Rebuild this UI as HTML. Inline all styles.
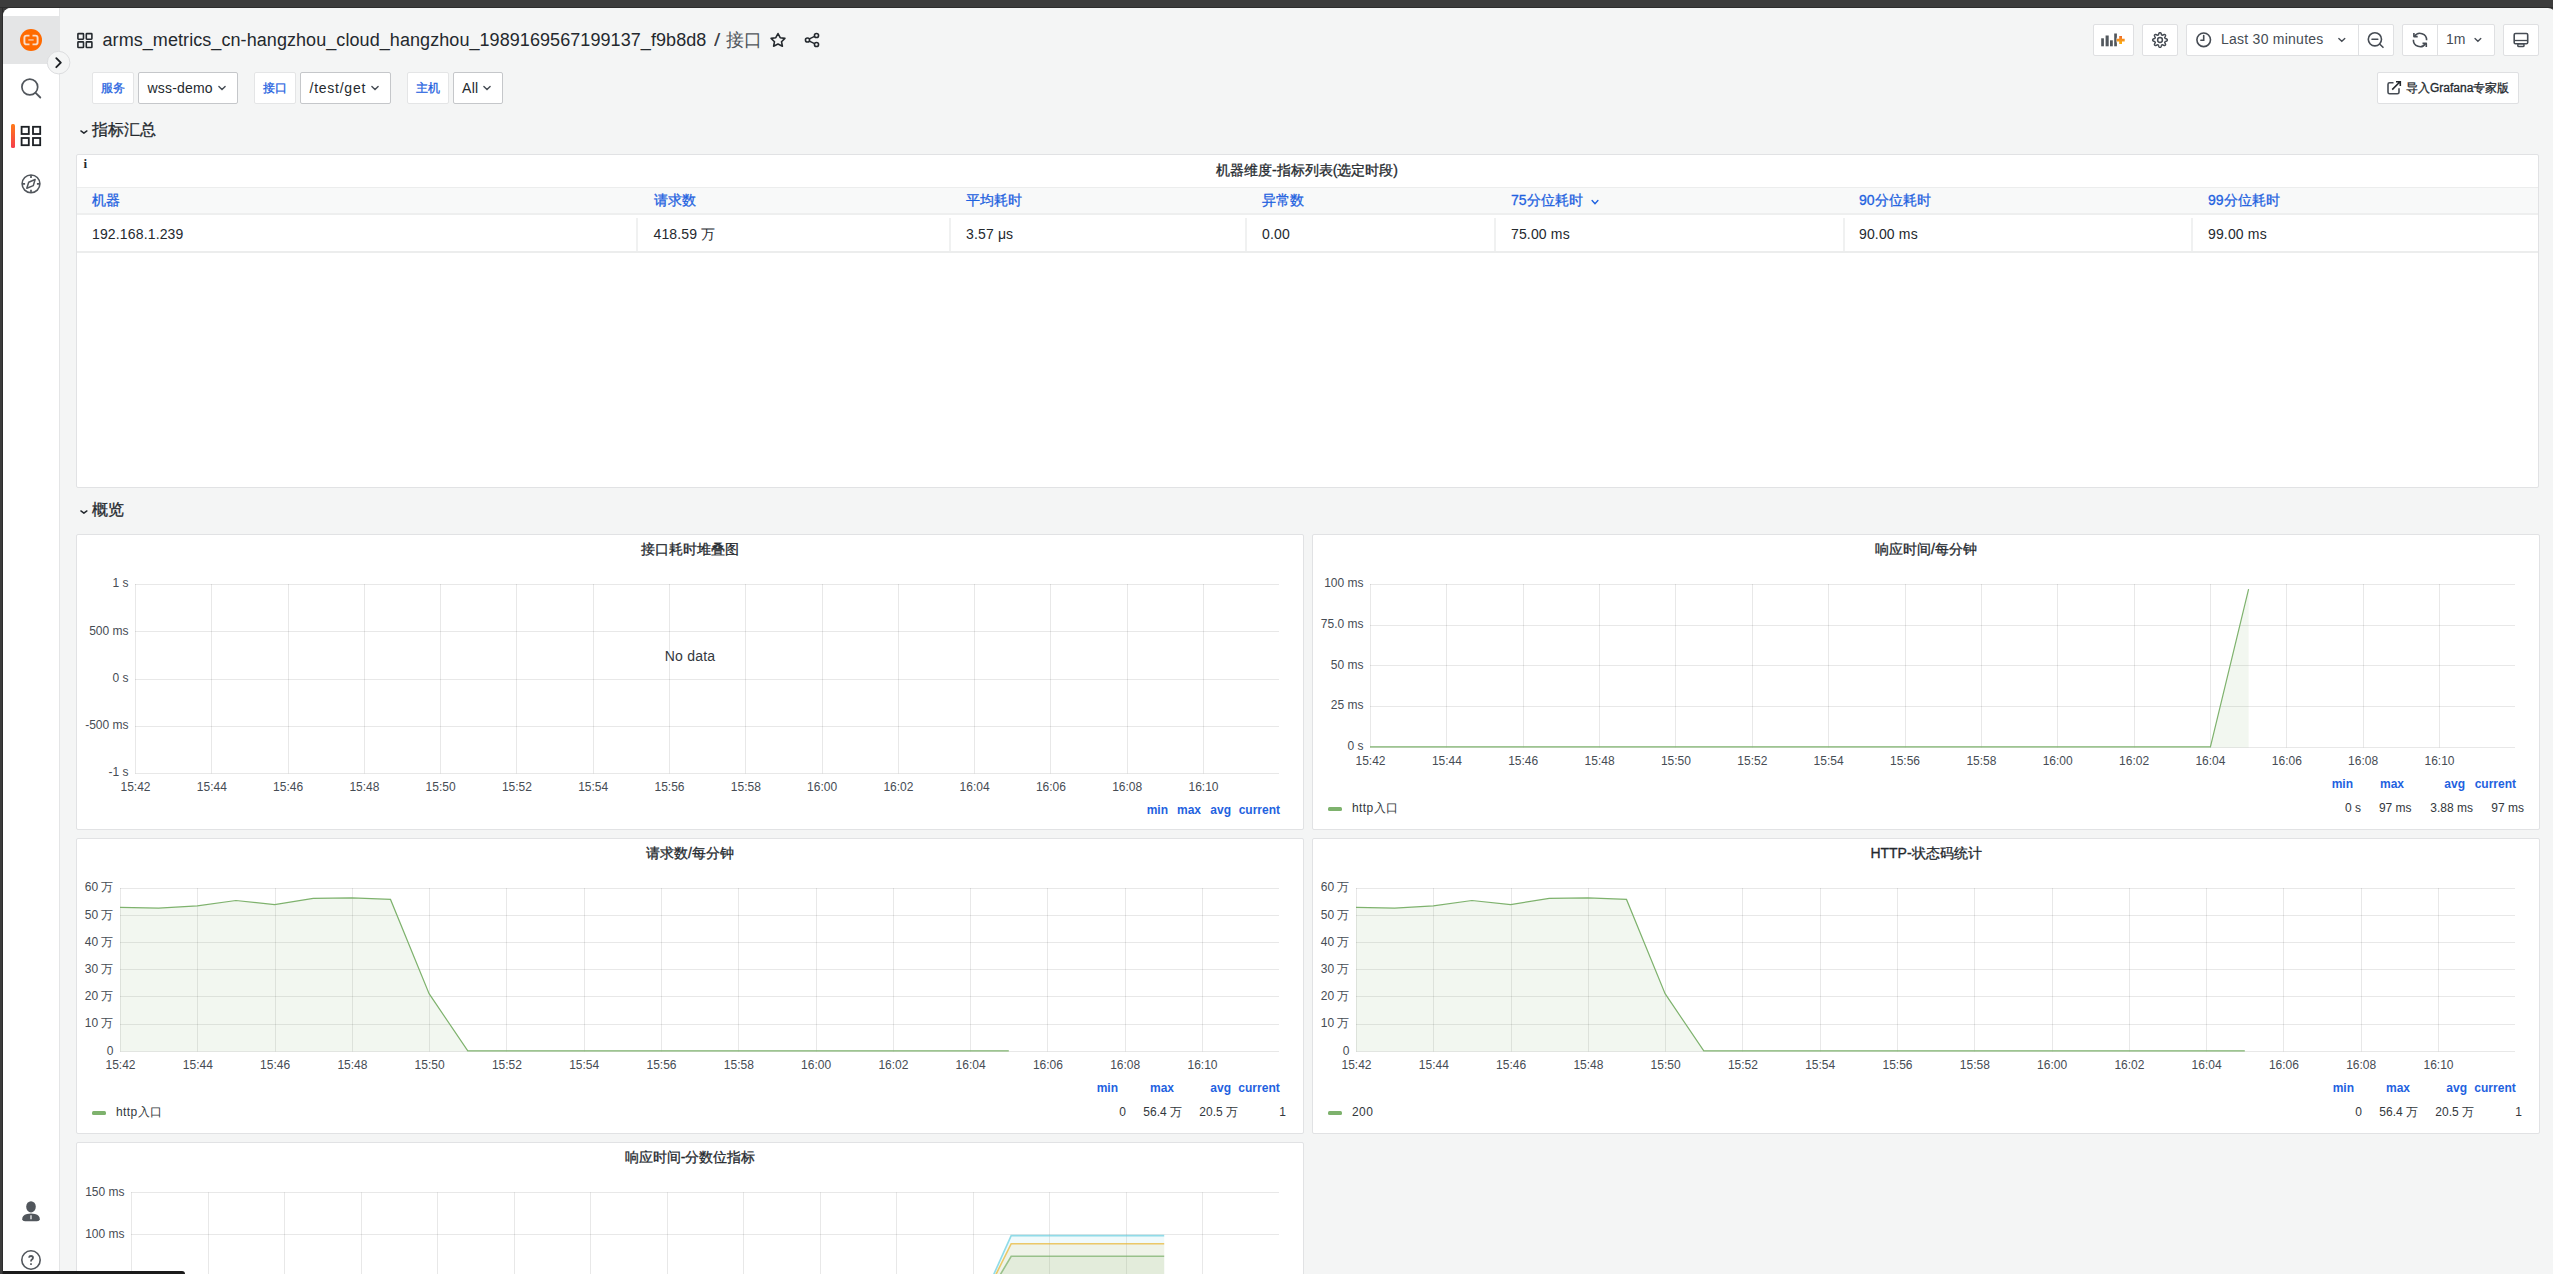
<!DOCTYPE html><html><head><meta charset="utf-8"><style>
html,body{margin:0;padding:0;}
body{width:2553px;height:1274px;overflow:hidden;position:relative;background:#3c3c3c;font-family:"Liberation Sans",sans-serif;}
.t{position:absolute;white-space:nowrap;}
svg{position:absolute;overflow:visible;}
</style></head><body>
<div style="position:absolute;left:0px;top:7px;width:2553px;height:1px;background:#2c2c2c;"></div>
<div style="position:absolute;left:2px;top:7px;width:1px;height:1267px;background:#2c2c2c;"></div>
<div style="position:absolute;left:3px;top:8px;width:2553px;height:1266px;background:#f4f5f5;border-top-left-radius:8px;border-top-right-radius:8px;"></div>
<div style="position:absolute;left:3px;top:8px;width:56px;height:1266px;background:#ffffff;border-top-left-radius:8px;border-right:1px solid #e4e5e6;box-sizing:border-box;width:57px;"></div>
<div style="position:absolute;left:3px;top:16px;width:56px;height:48px;background:#e4e5e6;"></div>
<svg style="left:0;top:0" width="70" height="1274">
<circle cx="31" cy="40" r="11" fill="#ff6a00"/>
<path d="M29.5 35.6 H26.6 Q24.4 35.6 24.4 37.8 V42.2 Q24.4 44.4 26.6 44.4 H29.5" fill="none" stroke="#f8dcc8" stroke-width="1.9"/>
<path d="M32.5 35.6 H35.4 Q37.6 35.6 37.6 37.8 V42.2 Q37.6 44.4 35.4 44.4 H32.5" fill="none" stroke="#f8dcc8" stroke-width="1.9"/>
<rect x="28.3" y="39.1" width="5.4" height="1.7" fill="#f5b88a"/>
<circle cx="29.8" cy="87" r="7.9" fill="none" stroke="#51565c" stroke-width="1.7"/>
<path d="M35.6 92.8 L40.3 97.5" stroke="#51565c" stroke-width="1.8" stroke-linecap="round"/>
<rect x="21.6" y="126.8" width="7.2" height="7.2" fill="none" stroke="#1d2125" stroke-width="1.8"/>
<rect x="33" y="126.8" width="7.2" height="7.2" fill="none" stroke="#1d2125" stroke-width="1.8"/>
<rect x="21.6" y="138" width="7.2" height="7.2" fill="none" stroke="#1d2125" stroke-width="1.8"/>
<rect x="33" y="138" width="7.2" height="7.2" fill="none" stroke="#1d2125" stroke-width="1.8"/>
<defs><linearGradient id="ab" x1="0" y1="0" x2="0" y2="1"><stop offset="0" stop-color="#ff7a1a"/><stop offset="1" stop-color="#f53e4c"/></linearGradient></defs>
<rect x="11" y="124" width="4" height="24" rx="1.5" fill="url(#ab)"/>
<circle cx="31" cy="183.85" r="8.9" fill="none" stroke="#51565c" stroke-width="1.6"/>
<path d="M31 175 V178 M31 189.7 V192.7 M22.2 183.85 H25.1 M36.9 183.85 H39.8" stroke="#51565c" stroke-width="1.7"/>
<path d="M35.1 179.5 L28.7 182.3 L26.8 188.3 L33.3 185.6 Z" fill="none" stroke="#51565c" stroke-width="1.5" stroke-linejoin="round"/>
<ellipse cx="31" cy="1206.8" rx="4.8" ry="5.6" fill="#51565c"/>
<path d="M22.2 1219.5 Q22 1215.2 27 1214 L31 1213.6 L35 1214 Q40 1215.2 39.8 1219.5 Q39.5 1221.2 37 1221.2 H25 Q22.5 1221.2 22.2 1219.5 Z" fill="#51565c"/>
<path d="M31 1215.2 V1219.2" stroke="#fff" stroke-width="1.2"/>
<circle cx="31" cy="1260" r="9.2" fill="none" stroke="#51565c" stroke-width="1.6"/>
<path d="M28.9 1257.6 Q29.3 1256 31 1256 Q33 1256 33 1257.8 Q33 1258.9 31.9 1259.5 Q31 1260 31 1261.5" fill="none" stroke="#51565c" stroke-width="1.8"/>
<rect x="30.1" y="1263.3" width="1.8" height="1.6" fill="#51565c"/>
</svg>
<svg style="left:0;top:0" width="90" height="90">
<circle cx="58.6" cy="62.6" r="11.3" fill="#f4f5f5" stroke="#dcdddf" stroke-width="1"/>
<path d="M56.3 58.2 L60.8 62.7 L56.3 67.2" fill="none" stroke="#1d2125" stroke-width="1.9" stroke-linecap="round" stroke-linejoin="round"/>
</svg>
<svg style="left:0;top:0" width="900" height="70">
<rect x="77.9" y="33.6" width="5.6" height="5.6" fill="none" stroke="#24292e" stroke-width="1.6" rx="0.6"/>
<rect x="86.3" y="33.6" width="5.6" height="5.6" fill="none" stroke="#24292e" stroke-width="1.6" rx="0.6"/>
<rect x="77.9" y="41.9" width="5.6" height="5.6" fill="none" stroke="#24292e" stroke-width="1.6" rx="0.6"/>
<rect x="86.3" y="41.9" width="5.6" height="5.6" fill="none" stroke="#24292e" stroke-width="1.6" rx="0.6"/>
<path d="M778 33.5 L780.2 37.7 L784.9 38.4 L781.5 41.7 L782.4 46.2 L778 44 L773.6 46.2 L774.5 41.7 L771.1 38.4 L775.8 37.7 Z" fill="none" stroke="#24292e" stroke-width="1.6" stroke-linejoin="round"/>
<circle cx="816.5" cy="35.5" r="2.05" fill="none" stroke="#24292e" stroke-width="1.6"/>
<circle cx="816.5" cy="44.5" r="2.05" fill="none" stroke="#24292e" stroke-width="1.6"/>
<circle cx="807.5" cy="40" r="2.05" fill="none" stroke="#24292e" stroke-width="1.6"/>
<path d="M809.4 38.9 L814.6 36.4 M809.4 41.1 L814.6 43.6" stroke="#24292e" stroke-width="1.5"/>
</svg>
<div class="t" style="top:25.5px;height:28px;line-height:28px;font-size:18px;color:#24292e;letter-spacing:0.07px;left:102.5px;">arms_metrics_cn-hangzhou_cloud_hangzhou_1989169567199137_f9b8d8</div>
<div class="t" style="top:25.5px;height:28px;line-height:28px;font-size:18px;color:#3b4046;left:713.5px;transform:scaleX(1.25);transform-origin:left;">/</div>
<div class="t" style="top:25.6px;height:28px;line-height:28px;font-size:18px;color:#50555b;left:726.0px;">接口</div>
<div style="position:absolute;left:2093px;top:24px;width:41px;height:32px;background:#fff;border:1px solid #dfe0e2;border-radius:2px;box-sizing:border-box;"></div>
<div style="position:absolute;left:2142px;top:24px;width:36px;height:32px;background:#fff;border:1px solid #dfe0e2;border-radius:2px;box-sizing:border-box;"></div>
<div style="position:absolute;left:2186px;top:24px;width:208px;height:32px;background:#fff;border:1px solid #dfe0e2;border-radius:2px;box-sizing:border-box;"></div>
<div style="position:absolute;left:2358px;top:25px;width:1px;height:30px;background:#dfe0e2;"></div>
<div style="position:absolute;left:2402px;top:24px;width:93px;height:32px;background:#fff;border:1px solid #dfe0e2;border-radius:2px;box-sizing:border-box;"></div>
<div style="position:absolute;left:2437px;top:25px;width:1px;height:30px;background:#dfe0e2;"></div>
<div style="position:absolute;left:2503px;top:24px;width:36px;height:32px;background:#fff;border:1px solid #dfe0e2;border-radius:2px;box-sizing:border-box;"></div>
<svg style="left:0;top:0" width="2553" height="70">
<g fill="#52575d">
<rect x="2101.2" y="38.3" width="2.7" height="8"/>
<rect x="2105.6" y="35.5" width="3.1" height="10.8"/>
<rect x="2110" y="40.3" width="2.8" height="6"/>
<rect x="2114.2" y="33.5" width="2.7" height="12.8"/>
</g>
<defs><linearGradient id="pg" x1="0" y1="0" x2="0" y2="1"><stop offset="0" stop-color="#f06a28"/><stop offset="0.5" stop-color="#f7941e"/><stop offset="1" stop-color="#fbb40a"/></linearGradient></defs>
<path d="M2120.6 36 V44.2 M2116.6 40.1 H2124.8" stroke="#fff" stroke-width="4.6"/>
<path d="M2120.6 36.1 V44.1 M2116.7 40.1 H2124.7" stroke="url(#pg)" stroke-width="2.8"/>
<circle cx="2160" cy="40" r="2.4" fill="none" stroke="#464c54" stroke-width="1.5"/>
<path d="M2167.30 40.00 L2167.29 40.29 L2167.28 40.57 L2167.02 40.83 L2166.62 41.05 L2166.18 41.23 L2165.74 41.38 L2165.33 41.50 L2165.04 41.64 L2164.97 41.83 L2164.90 42.03 L2164.81 42.22 L2164.72 42.41 L2164.83 42.70 L2165.03 43.08 L2165.24 43.50 L2165.42 43.94 L2165.55 44.37 L2165.55 44.74 L2165.36 44.96 L2165.16 45.16 L2164.96 45.36 L2164.74 45.55 L2164.37 45.55 L2163.94 45.42 L2163.50 45.24 L2163.08 45.03 L2162.70 44.83 L2162.41 44.72 L2162.22 44.81 L2162.03 44.90 L2161.83 44.97 L2161.64 45.04 L2161.50 45.33 L2161.38 45.74 L2161.23 46.18 L2161.05 46.62 L2160.83 47.02 L2160.57 47.28 L2160.29 47.29 L2160.00 47.30 L2159.71 47.29 L2159.43 47.28 L2159.17 47.02 L2158.95 46.62 L2158.77 46.18 L2158.62 45.74 L2158.50 45.33 L2158.36 45.04 L2158.17 44.97 L2157.97 44.90 L2157.78 44.81 L2157.59 44.72 L2157.30 44.83 L2156.92 45.03 L2156.50 45.24 L2156.06 45.42 L2155.63 45.55 L2155.26 45.55 L2155.04 45.36 L2154.84 45.16 L2154.64 44.96 L2154.45 44.74 L2154.45 44.37 L2154.58 43.94 L2154.76 43.50 L2154.97 43.08 L2155.17 42.70 L2155.28 42.41 L2155.19 42.22 L2155.10 42.03 L2155.03 41.83 L2154.96 41.64 L2154.67 41.50 L2154.26 41.38 L2153.82 41.23 L2153.38 41.05 L2152.98 40.83 L2152.72 40.57 L2152.71 40.29 L2152.70 40.00 L2152.71 39.71 L2152.72 39.43 L2152.98 39.17 L2153.38 38.95 L2153.82 38.77 L2154.26 38.62 L2154.67 38.50 L2154.96 38.36 L2155.03 38.17 L2155.10 37.97 L2155.19 37.78 L2155.28 37.59 L2155.17 37.30 L2154.97 36.92 L2154.76 36.50 L2154.58 36.06 L2154.45 35.63 L2154.45 35.26 L2154.64 35.04 L2154.84 34.84 L2155.04 34.64 L2155.26 34.45 L2155.63 34.45 L2156.06 34.58 L2156.50 34.76 L2156.92 34.97 L2157.30 35.17 L2157.59 35.28 L2157.78 35.19 L2157.97 35.10 L2158.17 35.03 L2158.36 34.96 L2158.50 34.67 L2158.62 34.26 L2158.77 33.82 L2158.95 33.38 L2159.17 32.98 L2159.43 32.72 L2159.71 32.71 L2160.00 32.70 L2160.29 32.71 L2160.57 32.72 L2160.83 32.98 L2161.05 33.38 L2161.23 33.82 L2161.38 34.26 L2161.50 34.67 L2161.64 34.96 L2161.83 35.03 L2162.03 35.10 L2162.22 35.19 L2162.41 35.28 L2162.70 35.17 L2163.08 34.97 L2163.50 34.76 L2163.94 34.58 L2164.37 34.45 L2164.74 34.45 L2164.96 34.64 L2165.16 34.84 L2165.36 35.04 L2165.55 35.26 L2165.55 35.63 L2165.42 36.06 L2165.24 36.50 L2165.03 36.92 L2164.83 37.30 L2164.72 37.59 L2164.81 37.78 L2164.90 37.97 L2164.97 38.17 L2165.04 38.36 L2165.33 38.50 L2165.74 38.62 L2166.18 38.77 L2166.62 38.95 L2167.02 39.17 L2167.28 39.43 L2167.29 39.71 Z" fill="none" stroke="#464c54" stroke-width="1.5" stroke-linejoin="round"/>
<circle cx="2203.7" cy="39.8" r="6.8" fill="none" stroke="#464c54" stroke-width="1.6"/>
<path d="M2203.7 35.6 V40.2 H2200.9" fill="none" stroke="#464c54" stroke-width="1.6" stroke-linecap="round"/>
<path d="M2338.8 38.6 L2341.8 41.3 L2344.8 38.6" fill="none" stroke="#464c54" stroke-width="1.4" stroke-linecap="round"/>
<circle cx="2374.9" cy="39.3" r="6.6" fill="none" stroke="#464c54" stroke-width="1.6"/>
<path d="M2372 39.3 H2377.8 M2379.6 44 L2383 47.3" stroke="#464c54" stroke-width="1.6" stroke-linecap="round"/>
<path d="M2414.4 36.5 A6.6 6.6 0 0 1 2426.6 40.3 M2425.6 43.5 A6.6 6.6 0 0 1 2413.4 39.7" fill="none" stroke="#464c54" stroke-width="1.6"/>
<path d="M2413.9 32.9 V36.6 H2417.7 M2426.3 47.1 V43.4 H2422.5" fill="none" stroke="#464c54" stroke-width="1.6" stroke-linejoin="round"/>
<path d="M2475 38.6 L2477.9 41.2 L2480.8 38.6" fill="none" stroke="#464c54" stroke-width="1.4" stroke-linecap="round"/>
<rect x="2514.2" y="33.5" width="13.5" height="10.2" rx="1.3" fill="none" stroke="#464c54" stroke-width="1.6"/>
<path d="M2514.2 40.5 H2527.7" stroke="#464c54" stroke-width="1.3"/>
<rect x="2517.8" y="43.7" width="6.2" height="2.8" rx="1.1" fill="none" stroke="#464c54" stroke-width="1.5"/>
</svg>
<div class="t" style="top:28.0px;height:22px;line-height:22px;font-size:14px;color:#464c54;letter-spacing:0.25px;left:2221.0px;">Last 30 minutes</div>
<div class="t" style="top:28.0px;height:22px;line-height:22px;font-size:14px;color:#464c54;left:2446.0px;">1m</div>
<div style="position:absolute;left:92px;top:72px;width:42px;height:32px;background:#fff;border:1px solid #e4e5e6;border-radius:2px;box-sizing:border-box;"></div>
<div style="position:absolute;left:138px;top:72px;width:100px;height:32px;background:#fff;border:1px solid #c5c7ca;border-radius:2px;box-sizing:border-box;"></div>
<div class="t" style="top:78.5px;height:19px;line-height:19px;font-size:12px;color:#1f62e0;-webkit-text-stroke:0.3px #1f62e0;left:-487.0px;width:1200px;text-align:center;">服务</div>
<div class="t" style="top:77.0px;height:22px;line-height:22px;font-size:14px;color:#24292e;letter-spacing:0.18px;left:147.5px;">wss-demo</div>
<div style="position:absolute;left:254px;top:72px;width:42px;height:32px;background:#fff;border:1px solid #e4e5e6;border-radius:2px;box-sizing:border-box;"></div>
<div style="position:absolute;left:300px;top:72px;width:91px;height:32px;background:#fff;border:1px solid #c5c7ca;border-radius:2px;box-sizing:border-box;"></div>
<div class="t" style="top:78.5px;height:19px;line-height:19px;font-size:12px;color:#1f62e0;-webkit-text-stroke:0.3px #1f62e0;left:-325.0px;width:1200px;text-align:center;">接口</div>
<div class="t" style="top:77.0px;height:22px;line-height:22px;font-size:14px;color:#24292e;letter-spacing:0.75px;left:309.5px;">/test/get</div>
<div style="position:absolute;left:407px;top:72px;width:42px;height:32px;background:#fff;border:1px solid #e4e5e6;border-radius:2px;box-sizing:border-box;"></div>
<div style="position:absolute;left:453px;top:72px;width:50px;height:32px;background:#fff;border:1px solid #c5c7ca;border-radius:2px;box-sizing:border-box;"></div>
<div class="t" style="top:78.5px;height:19px;line-height:19px;font-size:12px;color:#1f62e0;-webkit-text-stroke:0.3px #1f62e0;left:-172.0px;width:1200px;text-align:center;">主机</div>
<div class="t" style="top:77.0px;height:22px;line-height:22px;font-size:14px;color:#24292e;letter-spacing:0.3px;left:462.0px;">All</div>
<svg style="left:0;top:0" width="600" height="120"><path d="M218.9 86.4 L222 89.5 L225.1 86.4" fill="none" stroke="#464c54" stroke-width="1.4" stroke-linecap="round"/><path d="M371.9 86.4 L375 89.5 L378.1 86.4" fill="none" stroke="#464c54" stroke-width="1.4" stroke-linecap="round"/><path d="M483.9 86.4 L487 89.5 L490.1 86.4" fill="none" stroke="#464c54" stroke-width="1.4" stroke-linecap="round"/></svg>
<div style="position:absolute;left:2377px;top:72px;width:142px;height:32px;background:#fff;border:1px solid #dfe0e2;border-radius:2px;box-sizing:border-box;"></div>
<svg style="left:0;top:0" width="2553" height="120">
<path d="M2393.5 82.8 H2389.6 Q2388 82.8 2388 84.4 V92.2 Q2388 93.8 2389.6 93.8 H2397.4 Q2399 93.8 2399 92.2 V88.3" fill="none" stroke="#464c54" stroke-width="1.6"/>
<path d="M2392.2 89.6 L2400 81.8 M2396 81.8 H2400.3 V86" fill="none" stroke="#24292e" stroke-width="1.6"/>
</svg>
<div class="t" style="top:78.5px;height:19px;line-height:19px;font-size:12px;color:#24292e;-webkit-text-stroke:0.3px #24292e;left:2406.0px;">导入Grafana专家版</div>
<div class="t" style="top:116.6px;height:25px;line-height:25px;font-size:16px;color:#24292e;-webkit-text-stroke:0.3px #24292e;left:92.0px;">指标汇总</div>
<div class="t" style="top:496.6px;height:25px;line-height:25px;font-size:16px;color:#24292e;-webkit-text-stroke:0.3px #24292e;left:92.0px;">概览</div>
<svg style="left:0;top:0" width="200" height="600"><path d="M80.9 130.9 L83.9 133.2 L86.9 130.9" fill="none" stroke="#24292e" stroke-width="1.45" stroke-linecap="round" stroke-linejoin="round"/><path d="M80.9 510.9 L83.9 513.2 L86.9 510.9" fill="none" stroke="#24292e" stroke-width="1.45" stroke-linecap="round" stroke-linejoin="round"/></svg>
<div style="position:absolute;left:76px;top:154px;width:2463px;height:334px;background:#fff;border:1px solid #e1e2e4;border-radius:2px;box-sizing:border-box;"></div>
<div class="t" style="top:154.0px;height:20px;line-height:20px;font-size:13px;color:#24292e;font-weight:700;left:-514.8px;width:1200px;text-align:center;font-family:'Liberation Serif',serif;">i</div>
<div class="t" style="top:158.5px;height:22px;line-height:22px;font-size:14px;color:#24292e;-webkit-text-stroke:0.3px #24292e;left:707.0px;width:1200px;text-align:center;">机器维度-指标列表(选定时段)</div>
<div style="position:absolute;left:77px;top:187px;width:2461px;height:28px;background:#f8f9f9;border-top:1px solid #eceded;border-bottom:2px solid #eeefef;box-sizing:border-box;"></div>
<div style="position:absolute;left:77px;top:251px;width:2461px;height:2px;background:#eceded;"></div>
<div class="t" style="top:189.3px;height:22px;line-height:22px;font-size:14px;color:#1f62e0;-webkit-text-stroke:0.3px #1f62e0;left:92.0px;">机器</div>
<div class="t" style="top:222.5px;height:22px;line-height:22px;font-size:14px;color:#24292e;letter-spacing:0.15px;left:92.0px;">192.168.1.239</div>
<div class="t" style="top:189.3px;height:22px;line-height:22px;font-size:14px;color:#1f62e0;-webkit-text-stroke:0.3px #1f62e0;left:653.5px;">请求数</div>
<div class="t" style="top:222.5px;height:22px;line-height:22px;font-size:14px;color:#24292e;letter-spacing:0.15px;left:653.5px;">418.59 万</div>
<div class="t" style="top:189.3px;height:22px;line-height:22px;font-size:14px;color:#1f62e0;-webkit-text-stroke:0.3px #1f62e0;left:966.0px;">平均耗时</div>
<div class="t" style="top:222.5px;height:22px;line-height:22px;font-size:14px;color:#24292e;letter-spacing:0.15px;left:966.0px;">3.57 μs</div>
<div class="t" style="top:189.3px;height:22px;line-height:22px;font-size:14px;color:#1f62e0;-webkit-text-stroke:0.3px #1f62e0;left:1262.0px;">异常数</div>
<div class="t" style="top:222.5px;height:22px;line-height:22px;font-size:14px;color:#24292e;letter-spacing:0.15px;left:1262.0px;">0.00</div>
<div class="t" style="top:189.3px;height:22px;line-height:22px;font-size:14px;color:#1f62e0;-webkit-text-stroke:0.3px #1f62e0;left:1511.0px;">75分位耗时</div>
<div class="t" style="top:222.5px;height:22px;line-height:22px;font-size:14px;color:#24292e;letter-spacing:0.15px;left:1511.0px;">75.00 ms</div>
<div class="t" style="top:189.3px;height:22px;line-height:22px;font-size:14px;color:#1f62e0;-webkit-text-stroke:0.3px #1f62e0;left:1859.0px;">90分位耗时</div>
<div class="t" style="top:222.5px;height:22px;line-height:22px;font-size:14px;color:#24292e;letter-spacing:0.15px;left:1859.0px;">90.00 ms</div>
<div class="t" style="top:189.3px;height:22px;line-height:22px;font-size:14px;color:#1f62e0;-webkit-text-stroke:0.3px #1f62e0;left:2208.0px;">99分位耗时</div>
<div class="t" style="top:222.5px;height:22px;line-height:22px;font-size:14px;color:#24292e;letter-spacing:0.15px;left:2208.0px;">99.00 ms</div>
<div style="position:absolute;left:636px;top:218px;width:2px;height:33px;background:#f0f1f1;"></div>
<div style="position:absolute;left:949px;top:218px;width:2px;height:33px;background:#f0f1f1;"></div>
<div style="position:absolute;left:1245px;top:218px;width:2px;height:33px;background:#f0f1f1;"></div>
<div style="position:absolute;left:1494px;top:218px;width:2px;height:33px;background:#f0f1f1;"></div>
<div style="position:absolute;left:1843px;top:218px;width:2px;height:33px;background:#f0f1f1;"></div>
<div style="position:absolute;left:2191px;top:218px;width:2px;height:33px;background:#f0f1f1;"></div>
<svg style="left:0;top:0" width="1700" height="260"><path d="M1592.1 200.6 L1595 203.7 L1597.9 200.6" fill="none" stroke="#1f62e0" stroke-width="1.4" stroke-linecap="round"/></svg>
<div style="position:absolute;left:76px;top:534px;width:1228px;height:296px;background:#fff;border:1px solid #e1e2e4;border-radius:2px;box-sizing:border-box;"></div>
<div class="t" style="top:537.8px;height:22px;line-height:22px;font-size:14px;color:#24292e;-webkit-text-stroke:0.3px #24292e;left:90.0px;width:1200px;text-align:center;">接口耗时堆叠图</div>
<svg style="left:0;top:0" width="2553" height="1274"><path d="M135.0 584.5 H1279.0" stroke="rgba(0,0,0,0.09)" stroke-width="1"/><path d="M135.0 631.5 H1279.0" stroke="rgba(0,0,0,0.09)" stroke-width="1"/><path d="M135.0 679.5 H1279.0" stroke="rgba(0,0,0,0.09)" stroke-width="1"/><path d="M135.0 726.5 H1279.0" stroke="rgba(0,0,0,0.09)" stroke-width="1"/><path d="M135.0 773.5 H1279.0" stroke="rgba(0,0,0,0.09)" stroke-width="1"/><path d="M135.5 584.0 V773.5" stroke="rgba(0,0,0,0.09)" stroke-width="1"/><path d="M211.5 584.0 V773.5" stroke="rgba(0,0,0,0.09)" stroke-width="1"/><path d="M288.5 584.0 V773.5" stroke="rgba(0,0,0,0.09)" stroke-width="1"/><path d="M364.5 584.0 V773.5" stroke="rgba(0,0,0,0.09)" stroke-width="1"/><path d="M440.5 584.0 V773.5" stroke="rgba(0,0,0,0.09)" stroke-width="1"/><path d="M516.5 584.0 V773.5" stroke="rgba(0,0,0,0.09)" stroke-width="1"/><path d="M593.5 584.0 V773.5" stroke="rgba(0,0,0,0.09)" stroke-width="1"/><path d="M669.5 584.0 V773.5" stroke="rgba(0,0,0,0.09)" stroke-width="1"/><path d="M745.5 584.0 V773.5" stroke="rgba(0,0,0,0.09)" stroke-width="1"/><path d="M822.5 584.0 V773.5" stroke="rgba(0,0,0,0.09)" stroke-width="1"/><path d="M898.5 584.0 V773.5" stroke="rgba(0,0,0,0.09)" stroke-width="1"/><path d="M974.5 584.0 V773.5" stroke="rgba(0,0,0,0.09)" stroke-width="1"/><path d="M1050.5 584.0 V773.5" stroke="rgba(0,0,0,0.09)" stroke-width="1"/><path d="M1127.5 584.0 V773.5" stroke="rgba(0,0,0,0.09)" stroke-width="1"/><path d="M1203.5 584.0 V773.5" stroke="rgba(0,0,0,0.09)" stroke-width="1"/></svg>
<div class="t" style="top:574.3px;height:19px;line-height:19px;font-size:12px;color:#464c54;right:2424.5px;text-align:right;">1 s</div>
<div class="t" style="top:621.5px;height:19px;line-height:19px;font-size:12px;color:#464c54;right:2424.5px;text-align:right;">500 ms</div>
<div class="t" style="top:668.8px;height:19px;line-height:19px;font-size:12px;color:#464c54;right:2424.5px;text-align:right;">0 s</div>
<div class="t" style="top:716.0px;height:19px;line-height:19px;font-size:12px;color:#464c54;right:2424.5px;text-align:right;">-500 ms</div>
<div class="t" style="top:763.4px;height:19px;line-height:19px;font-size:12px;color:#464c54;right:2424.5px;text-align:right;">-1 s</div>
<div class="t" style="top:778.1px;height:19px;line-height:19px;font-size:12px;color:#464c54;left:-464.5px;width:1200px;text-align:center;">15:42</div>
<div class="t" style="top:778.1px;height:19px;line-height:19px;font-size:12px;color:#464c54;left:-388.2px;width:1200px;text-align:center;">15:44</div>
<div class="t" style="top:778.1px;height:19px;line-height:19px;font-size:12px;color:#464c54;left:-311.9px;width:1200px;text-align:center;">15:46</div>
<div class="t" style="top:778.1px;height:19px;line-height:19px;font-size:12px;color:#464c54;left:-235.6px;width:1200px;text-align:center;">15:48</div>
<div class="t" style="top:778.1px;height:19px;line-height:19px;font-size:12px;color:#464c54;left:-159.4px;width:1200px;text-align:center;">15:50</div>
<div class="t" style="top:778.1px;height:19px;line-height:19px;font-size:12px;color:#464c54;left:-83.1px;width:1200px;text-align:center;">15:52</div>
<div class="t" style="top:778.1px;height:19px;line-height:19px;font-size:12px;color:#464c54;left:-6.8px;width:1200px;text-align:center;">15:54</div>
<div class="t" style="top:778.1px;height:19px;line-height:19px;font-size:12px;color:#464c54;left:69.5px;width:1200px;text-align:center;">15:56</div>
<div class="t" style="top:778.1px;height:19px;line-height:19px;font-size:12px;color:#464c54;left:145.8px;width:1200px;text-align:center;">15:58</div>
<div class="t" style="top:778.1px;height:19px;line-height:19px;font-size:12px;color:#464c54;left:222.1px;width:1200px;text-align:center;">16:00</div>
<div class="t" style="top:778.1px;height:19px;line-height:19px;font-size:12px;color:#464c54;left:298.4px;width:1200px;text-align:center;">16:02</div>
<div class="t" style="top:778.1px;height:19px;line-height:19px;font-size:12px;color:#464c54;left:374.6px;width:1200px;text-align:center;">16:04</div>
<div class="t" style="top:778.1px;height:19px;line-height:19px;font-size:12px;color:#464c54;left:450.9px;width:1200px;text-align:center;">16:06</div>
<div class="t" style="top:778.1px;height:19px;line-height:19px;font-size:12px;color:#464c54;left:527.2px;width:1200px;text-align:center;">16:08</div>
<div class="t" style="top:778.1px;height:19px;line-height:19px;font-size:12px;color:#464c54;left:603.5px;width:1200px;text-align:center;">16:10</div>
<div class="t" style="top:644.5px;height:22px;line-height:22px;font-size:14px;color:#33383d;letter-spacing:0.2px;left:90.0px;width:1200px;text-align:center;">No data</div>
<div class="t" style="top:800.5px;height:19px;line-height:19px;font-size:12px;color:#1f62e0;font-weight:700;right:1385.0px;text-align:right;">min</div>
<div class="t" style="top:800.5px;height:19px;line-height:19px;font-size:12px;color:#1f62e0;font-weight:700;right:1352.0px;text-align:right;">max</div>
<div class="t" style="top:800.5px;height:19px;line-height:19px;font-size:12px;color:#1f62e0;font-weight:700;right:1322.0px;text-align:right;">avg</div>
<div class="t" style="top:800.5px;height:19px;line-height:19px;font-size:12px;color:#1f62e0;font-weight:700;right:1273.0px;text-align:right;">current</div>
<div style="position:absolute;left:1312px;top:534px;width:1228px;height:296px;background:#fff;border:1px solid #e1e2e4;border-radius:2px;box-sizing:border-box;"></div>
<div class="t" style="top:537.8px;height:22px;line-height:22px;font-size:14px;color:#24292e;-webkit-text-stroke:0.3px #24292e;left:1326.0px;width:1200px;text-align:center;">响应时间/每分钟</div>
<svg style="left:0;top:0" width="2553" height="1274"><path d="M1370.0 584.5 H2515.0" stroke="rgba(0,0,0,0.09)" stroke-width="1"/><path d="M1370.0 625.5 H2515.0" stroke="rgba(0,0,0,0.09)" stroke-width="1"/><path d="M1370.0 665.5 H2515.0" stroke="rgba(0,0,0,0.09)" stroke-width="1"/><path d="M1370.0 706.5 H2515.0" stroke="rgba(0,0,0,0.09)" stroke-width="1"/><path d="M1370.0 747.5 H2515.0" stroke="rgba(0,0,0,0.09)" stroke-width="1"/><path d="M1370.5 584.0 V747.5" stroke="rgba(0,0,0,0.09)" stroke-width="1"/><path d="M1446.5 584.0 V747.5" stroke="rgba(0,0,0,0.09)" stroke-width="1"/><path d="M1523.5 584.0 V747.5" stroke="rgba(0,0,0,0.09)" stroke-width="1"/><path d="M1599.5 584.0 V747.5" stroke="rgba(0,0,0,0.09)" stroke-width="1"/><path d="M1675.5 584.0 V747.5" stroke="rgba(0,0,0,0.09)" stroke-width="1"/><path d="M1752.5 584.0 V747.5" stroke="rgba(0,0,0,0.09)" stroke-width="1"/><path d="M1828.5 584.0 V747.5" stroke="rgba(0,0,0,0.09)" stroke-width="1"/><path d="M1905.5 584.0 V747.5" stroke="rgba(0,0,0,0.09)" stroke-width="1"/><path d="M1981.5 584.0 V747.5" stroke="rgba(0,0,0,0.09)" stroke-width="1"/><path d="M2057.5 584.0 V747.5" stroke="rgba(0,0,0,0.09)" stroke-width="1"/><path d="M2134.5 584.0 V747.5" stroke="rgba(0,0,0,0.09)" stroke-width="1"/><path d="M2210.5 584.0 V747.5" stroke="rgba(0,0,0,0.09)" stroke-width="1"/><path d="M2286.5 584.0 V747.5" stroke="rgba(0,0,0,0.09)" stroke-width="1"/><path d="M2363.5 584.0 V747.5" stroke="rgba(0,0,0,0.09)" stroke-width="1"/><path d="M2439.5 584.0 V747.5" stroke="rgba(0,0,0,0.09)" stroke-width="1"/><path d="M2210.4 747.5 L2248.6 589.2 V747.5 Z" fill="#7eb26d" fill-opacity="0.1"/>
<path d="M1370.0 746.9 H2210.4 L2248.6 589.2" fill="none" stroke="#7eb26d" stroke-width="1.2"/></svg>
<div class="t" style="top:574.3px;height:19px;line-height:19px;font-size:12px;color:#464c54;right:1189.5px;text-align:right;">100 ms</div>
<div class="t" style="top:614.9px;height:19px;line-height:19px;font-size:12px;color:#464c54;right:1189.5px;text-align:right;">75.0 ms</div>
<div class="t" style="top:655.6px;height:19px;line-height:19px;font-size:12px;color:#464c54;right:1189.5px;text-align:right;">50 ms</div>
<div class="t" style="top:696.3px;height:19px;line-height:19px;font-size:12px;color:#464c54;right:1189.5px;text-align:right;">25 ms</div>
<div class="t" style="top:736.9px;height:19px;line-height:19px;font-size:12px;color:#464c54;right:1189.5px;text-align:right;">0 s</div>
<div class="t" style="top:752.2px;height:19px;line-height:19px;font-size:12px;color:#464c54;left:770.5px;width:1200px;text-align:center;">15:42</div>
<div class="t" style="top:752.2px;height:19px;line-height:19px;font-size:12px;color:#464c54;left:846.9px;width:1200px;text-align:center;">15:44</div>
<div class="t" style="top:752.2px;height:19px;line-height:19px;font-size:12px;color:#464c54;left:923.2px;width:1200px;text-align:center;">15:46</div>
<div class="t" style="top:752.2px;height:19px;line-height:19px;font-size:12px;color:#464c54;left:999.6px;width:1200px;text-align:center;">15:48</div>
<div class="t" style="top:752.2px;height:19px;line-height:19px;font-size:12px;color:#464c54;left:1075.9px;width:1200px;text-align:center;">15:50</div>
<div class="t" style="top:752.2px;height:19px;line-height:19px;font-size:12px;color:#464c54;left:1152.3px;width:1200px;text-align:center;">15:52</div>
<div class="t" style="top:752.2px;height:19px;line-height:19px;font-size:12px;color:#464c54;left:1228.6px;width:1200px;text-align:center;">15:54</div>
<div class="t" style="top:752.2px;height:19px;line-height:19px;font-size:12px;color:#464c54;left:1305.0px;width:1200px;text-align:center;">15:56</div>
<div class="t" style="top:752.2px;height:19px;line-height:19px;font-size:12px;color:#464c54;left:1381.4px;width:1200px;text-align:center;">15:58</div>
<div class="t" style="top:752.2px;height:19px;line-height:19px;font-size:12px;color:#464c54;left:1457.7px;width:1200px;text-align:center;">16:00</div>
<div class="t" style="top:752.2px;height:19px;line-height:19px;font-size:12px;color:#464c54;left:1534.1px;width:1200px;text-align:center;">16:02</div>
<div class="t" style="top:752.2px;height:19px;line-height:19px;font-size:12px;color:#464c54;left:1610.4px;width:1200px;text-align:center;">16:04</div>
<div class="t" style="top:752.2px;height:19px;line-height:19px;font-size:12px;color:#464c54;left:1686.8px;width:1200px;text-align:center;">16:06</div>
<div class="t" style="top:752.2px;height:19px;line-height:19px;font-size:12px;color:#464c54;left:1763.1px;width:1200px;text-align:center;">16:08</div>
<div class="t" style="top:752.2px;height:19px;line-height:19px;font-size:12px;color:#464c54;left:1839.5px;width:1200px;text-align:center;">16:10</div>
<div class="t" style="top:774.5px;height:19px;line-height:19px;font-size:12px;color:#1f62e0;font-weight:700;right:200.0px;text-align:right;">min</div>
<div class="t" style="top:774.5px;height:19px;line-height:19px;font-size:12px;color:#1f62e0;font-weight:700;right:149.0px;text-align:right;">max</div>
<div class="t" style="top:774.5px;height:19px;line-height:19px;font-size:12px;color:#1f62e0;font-weight:700;right:88.0px;text-align:right;">avg</div>
<div class="t" style="top:774.5px;height:19px;line-height:19px;font-size:12px;color:#1f62e0;font-weight:700;right:37.0px;text-align:right;">current</div>
<div class="t" style="top:798.9px;height:19px;line-height:19px;font-size:12px;color:#33383d;right:192.0px;text-align:right;">0 s</div>
<div class="t" style="top:798.9px;height:19px;line-height:19px;font-size:12px;color:#33383d;right:141.4px;text-align:right;">97 ms</div>
<div class="t" style="top:798.9px;height:19px;line-height:19px;font-size:12px;color:#33383d;right:80.0px;text-align:right;">3.88 ms</div>
<div class="t" style="top:798.9px;height:19px;line-height:19px;font-size:12px;color:#33383d;right:29.0px;text-align:right;">97 ms</div>
<div style="position:absolute;left:1328px;top:807px;width:14px;height:4px;background:#7eb26d;border-radius:1.5px;"></div>
<div class="t" style="top:799.0px;height:19px;line-height:19px;font-size:12px;color:#33383d;letter-spacing:0.4px;left:1352.0px;">http入口</div>
<div style="position:absolute;left:76px;top:838px;width:1228px;height:296px;background:#fff;border:1px solid #e1e2e4;border-radius:2px;box-sizing:border-box;"></div>
<div class="t" style="top:841.8px;height:22px;line-height:22px;font-size:14px;color:#24292e;-webkit-text-stroke:0.3px #24292e;left:90.0px;width:1200px;text-align:center;">请求数/每分钟</div>
<svg style="left:0;top:0" width="2553" height="1274"><path d="M120.0 888.5 H1279.0" stroke="rgba(0,0,0,0.09)" stroke-width="1"/><path d="M120.0 915.5 H1279.0" stroke="rgba(0,0,0,0.09)" stroke-width="1"/><path d="M120.0 942.5 H1279.0" stroke="rgba(0,0,0,0.09)" stroke-width="1"/><path d="M120.0 969.5 H1279.0" stroke="rgba(0,0,0,0.09)" stroke-width="1"/><path d="M120.0 996.5 H1279.0" stroke="rgba(0,0,0,0.09)" stroke-width="1"/><path d="M120.0 1024.5 H1279.0" stroke="rgba(0,0,0,0.09)" stroke-width="1"/><path d="M120.0 1051.5 H1279.0" stroke="rgba(0,0,0,0.09)" stroke-width="1"/><path d="M120.5 888.0 V1051.5" stroke="rgba(0,0,0,0.09)" stroke-width="1"/><path d="M197.5 888.0 V1051.5" stroke="rgba(0,0,0,0.09)" stroke-width="1"/><path d="M275.5 888.0 V1051.5" stroke="rgba(0,0,0,0.09)" stroke-width="1"/><path d="M352.5 888.0 V1051.5" stroke="rgba(0,0,0,0.09)" stroke-width="1"/><path d="M429.5 888.0 V1051.5" stroke="rgba(0,0,0,0.09)" stroke-width="1"/><path d="M506.5 888.0 V1051.5" stroke="rgba(0,0,0,0.09)" stroke-width="1"/><path d="M584.5 888.0 V1051.5" stroke="rgba(0,0,0,0.09)" stroke-width="1"/><path d="M661.5 888.0 V1051.5" stroke="rgba(0,0,0,0.09)" stroke-width="1"/><path d="M738.5 888.0 V1051.5" stroke="rgba(0,0,0,0.09)" stroke-width="1"/><path d="M816.5 888.0 V1051.5" stroke="rgba(0,0,0,0.09)" stroke-width="1"/><path d="M893.5 888.0 V1051.5" stroke="rgba(0,0,0,0.09)" stroke-width="1"/><path d="M970.5 888.0 V1051.5" stroke="rgba(0,0,0,0.09)" stroke-width="1"/><path d="M1047.5 888.0 V1051.5" stroke="rgba(0,0,0,0.09)" stroke-width="1"/><path d="M1125.5 888.0 V1051.5" stroke="rgba(0,0,0,0.09)" stroke-width="1"/><path d="M1202.5 888.0 V1051.5" stroke="rgba(0,0,0,0.09)" stroke-width="1"/><polygon points="120.0,1051.5 120.0,907.3 158.6,908.1 197.3,905.9 235.9,900.5 274.6,904.6 313.2,898.3 351.9,897.8 390.5,899.4 429.1,993.7 467.8,1050.9 467.8,1051.5" fill="#7eb26d" fill-opacity="0.1"/><polyline points="120.0,907.3 158.6,908.1 197.3,905.9 235.9,900.5 274.6,904.6 313.2,898.3 351.9,897.8 390.5,899.4 429.1,993.7 467.8,1050.9 506.4,1050.9 545.1,1050.9 583.7,1050.9 622.4,1050.9 661.0,1050.9 699.6,1050.9 738.3,1050.9 776.9,1050.9 815.6,1050.9 854.2,1050.9 892.9,1050.9 931.5,1050.9 970.1,1050.9 1008.8,1050.9" fill="none" stroke="#7eb26d" stroke-width="1.2"/></svg>
<div class="t" style="top:878.3px;height:19px;line-height:19px;font-size:12px;color:#464c54;right:2439.5px;text-align:right;">60 万</div>
<div class="t" style="top:905.5px;height:19px;line-height:19px;font-size:12px;color:#464c54;right:2439.5px;text-align:right;">50 万</div>
<div class="t" style="top:932.6px;height:19px;line-height:19px;font-size:12px;color:#464c54;right:2439.5px;text-align:right;">40 万</div>
<div class="t" style="top:959.7px;height:19px;line-height:19px;font-size:12px;color:#464c54;right:2439.5px;text-align:right;">30 万</div>
<div class="t" style="top:986.7px;height:19px;line-height:19px;font-size:12px;color:#464c54;right:2439.5px;text-align:right;">20 万</div>
<div class="t" style="top:1013.8px;height:19px;line-height:19px;font-size:12px;color:#464c54;right:2439.5px;text-align:right;">10 万</div>
<div class="t" style="top:1041.5px;height:19px;line-height:19px;font-size:12px;color:#464c54;right:2439.5px;text-align:right;">0</div>
<div class="t" style="top:1055.8px;height:19px;line-height:19px;font-size:12px;color:#464c54;left:-479.5px;width:1200px;text-align:center;">15:42</div>
<div class="t" style="top:1055.8px;height:19px;line-height:19px;font-size:12px;color:#464c54;left:-402.2px;width:1200px;text-align:center;">15:44</div>
<div class="t" style="top:1055.8px;height:19px;line-height:19px;font-size:12px;color:#464c54;left:-324.9px;width:1200px;text-align:center;">15:46</div>
<div class="t" style="top:1055.8px;height:19px;line-height:19px;font-size:12px;color:#464c54;left:-247.6px;width:1200px;text-align:center;">15:48</div>
<div class="t" style="top:1055.8px;height:19px;line-height:19px;font-size:12px;color:#464c54;left:-170.4px;width:1200px;text-align:center;">15:50</div>
<div class="t" style="top:1055.8px;height:19px;line-height:19px;font-size:12px;color:#464c54;left:-93.1px;width:1200px;text-align:center;">15:52</div>
<div class="t" style="top:1055.8px;height:19px;line-height:19px;font-size:12px;color:#464c54;left:-15.8px;width:1200px;text-align:center;">15:54</div>
<div class="t" style="top:1055.8px;height:19px;line-height:19px;font-size:12px;color:#464c54;left:61.5px;width:1200px;text-align:center;">15:56</div>
<div class="t" style="top:1055.8px;height:19px;line-height:19px;font-size:12px;color:#464c54;left:138.8px;width:1200px;text-align:center;">15:58</div>
<div class="t" style="top:1055.8px;height:19px;line-height:19px;font-size:12px;color:#464c54;left:216.1px;width:1200px;text-align:center;">16:00</div>
<div class="t" style="top:1055.8px;height:19px;line-height:19px;font-size:12px;color:#464c54;left:293.4px;width:1200px;text-align:center;">16:02</div>
<div class="t" style="top:1055.8px;height:19px;line-height:19px;font-size:12px;color:#464c54;left:370.6px;width:1200px;text-align:center;">16:04</div>
<div class="t" style="top:1055.8px;height:19px;line-height:19px;font-size:12px;color:#464c54;left:447.9px;width:1200px;text-align:center;">16:06</div>
<div class="t" style="top:1055.8px;height:19px;line-height:19px;font-size:12px;color:#464c54;left:525.2px;width:1200px;text-align:center;">16:08</div>
<div class="t" style="top:1055.8px;height:19px;line-height:19px;font-size:12px;color:#464c54;left:602.5px;width:1200px;text-align:center;">16:10</div>
<div class="t" style="top:1078.8px;height:19px;line-height:19px;font-size:12px;color:#1f62e0;font-weight:700;right:1435.0px;text-align:right;">min</div>
<div class="t" style="top:1078.8px;height:19px;line-height:19px;font-size:12px;color:#1f62e0;font-weight:700;right:1379.0px;text-align:right;">max</div>
<div class="t" style="top:1078.8px;height:19px;line-height:19px;font-size:12px;color:#1f62e0;font-weight:700;right:1322.0px;text-align:right;">avg</div>
<div class="t" style="top:1078.8px;height:19px;line-height:19px;font-size:12px;color:#1f62e0;font-weight:700;right:1273.3px;text-align:right;">current</div>
<div class="t" style="top:1103.2px;height:19px;line-height:19px;font-size:12px;color:#33383d;right:1427.0px;text-align:right;">0</div>
<div class="t" style="top:1103.2px;height:19px;line-height:19px;font-size:12px;color:#33383d;right:1371.0px;text-align:right;">56.4 万</div>
<div class="t" style="top:1103.2px;height:19px;line-height:19px;font-size:12px;color:#33383d;right:1315.0px;text-align:right;">20.5 万</div>
<div class="t" style="top:1103.2px;height:19px;line-height:19px;font-size:12px;color:#33383d;right:1267.0px;text-align:right;">1</div>
<div style="position:absolute;left:92px;top:1111px;width:14px;height:4px;background:#7eb26d;border-radius:1.5px;"></div>
<div class="t" style="top:1103.3px;height:19px;line-height:19px;font-size:12px;color:#33383d;letter-spacing:0.4px;left:116.0px;">http入口</div>
<div style="position:absolute;left:1312px;top:838px;width:1228px;height:296px;background:#fff;border:1px solid #e1e2e4;border-radius:2px;box-sizing:border-box;"></div>
<div class="t" style="top:841.8px;height:22px;line-height:22px;font-size:14px;color:#24292e;-webkit-text-stroke:0.3px #24292e;left:1326.0px;width:1200px;text-align:center;">HTTP-状态码统计</div>
<svg style="left:0;top:0" width="2553" height="1274"><path d="M1356.0 888.5 H2515.0" stroke="rgba(0,0,0,0.09)" stroke-width="1"/><path d="M1356.0 915.5 H2515.0" stroke="rgba(0,0,0,0.09)" stroke-width="1"/><path d="M1356.0 942.5 H2515.0" stroke="rgba(0,0,0,0.09)" stroke-width="1"/><path d="M1356.0 969.5 H2515.0" stroke="rgba(0,0,0,0.09)" stroke-width="1"/><path d="M1356.0 996.5 H2515.0" stroke="rgba(0,0,0,0.09)" stroke-width="1"/><path d="M1356.0 1024.5 H2515.0" stroke="rgba(0,0,0,0.09)" stroke-width="1"/><path d="M1356.0 1051.5 H2515.0" stroke="rgba(0,0,0,0.09)" stroke-width="1"/><path d="M1356.5 888.0 V1051.5" stroke="rgba(0,0,0,0.09)" stroke-width="1"/><path d="M1433.5 888.0 V1051.5" stroke="rgba(0,0,0,0.09)" stroke-width="1"/><path d="M1511.5 888.0 V1051.5" stroke="rgba(0,0,0,0.09)" stroke-width="1"/><path d="M1588.5 888.0 V1051.5" stroke="rgba(0,0,0,0.09)" stroke-width="1"/><path d="M1665.5 888.0 V1051.5" stroke="rgba(0,0,0,0.09)" stroke-width="1"/><path d="M1742.5 888.0 V1051.5" stroke="rgba(0,0,0,0.09)" stroke-width="1"/><path d="M1820.5 888.0 V1051.5" stroke="rgba(0,0,0,0.09)" stroke-width="1"/><path d="M1897.5 888.0 V1051.5" stroke="rgba(0,0,0,0.09)" stroke-width="1"/><path d="M1974.5 888.0 V1051.5" stroke="rgba(0,0,0,0.09)" stroke-width="1"/><path d="M2052.5 888.0 V1051.5" stroke="rgba(0,0,0,0.09)" stroke-width="1"/><path d="M2129.5 888.0 V1051.5" stroke="rgba(0,0,0,0.09)" stroke-width="1"/><path d="M2206.5 888.0 V1051.5" stroke="rgba(0,0,0,0.09)" stroke-width="1"/><path d="M2283.5 888.0 V1051.5" stroke="rgba(0,0,0,0.09)" stroke-width="1"/><path d="M2361.5 888.0 V1051.5" stroke="rgba(0,0,0,0.09)" stroke-width="1"/><path d="M2438.5 888.0 V1051.5" stroke="rgba(0,0,0,0.09)" stroke-width="1"/><polygon points="1356.0,1051.5 1356.0,907.3 1394.6,908.1 1433.3,905.9 1471.9,900.5 1510.6,904.6 1549.2,898.3 1587.9,897.8 1626.5,899.4 1665.1,993.7 1703.8,1050.9 1703.8,1051.5" fill="#7eb26d" fill-opacity="0.1"/><polyline points="1356.0,907.3 1394.6,908.1 1433.3,905.9 1471.9,900.5 1510.6,904.6 1549.2,898.3 1587.9,897.8 1626.5,899.4 1665.1,993.7 1703.8,1050.9 1742.4,1050.9 1781.1,1050.9 1819.7,1050.9 1858.4,1050.9 1897.0,1050.9 1935.6,1050.9 1974.3,1050.9 2012.9,1050.9 2051.6,1050.9 2090.2,1050.9 2128.9,1050.9 2167.5,1050.9 2206.1,1050.9 2244.8,1050.9" fill="none" stroke="#7eb26d" stroke-width="1.2"/></svg>
<div class="t" style="top:878.3px;height:19px;line-height:19px;font-size:12px;color:#464c54;right:1203.5px;text-align:right;">60 万</div>
<div class="t" style="top:905.5px;height:19px;line-height:19px;font-size:12px;color:#464c54;right:1203.5px;text-align:right;">50 万</div>
<div class="t" style="top:932.6px;height:19px;line-height:19px;font-size:12px;color:#464c54;right:1203.5px;text-align:right;">40 万</div>
<div class="t" style="top:959.7px;height:19px;line-height:19px;font-size:12px;color:#464c54;right:1203.5px;text-align:right;">30 万</div>
<div class="t" style="top:986.7px;height:19px;line-height:19px;font-size:12px;color:#464c54;right:1203.5px;text-align:right;">20 万</div>
<div class="t" style="top:1013.8px;height:19px;line-height:19px;font-size:12px;color:#464c54;right:1203.5px;text-align:right;">10 万</div>
<div class="t" style="top:1041.5px;height:19px;line-height:19px;font-size:12px;color:#464c54;right:1203.5px;text-align:right;">0</div>
<div class="t" style="top:1055.8px;height:19px;line-height:19px;font-size:12px;color:#464c54;left:756.5px;width:1200px;text-align:center;">15:42</div>
<div class="t" style="top:1055.8px;height:19px;line-height:19px;font-size:12px;color:#464c54;left:833.8px;width:1200px;text-align:center;">15:44</div>
<div class="t" style="top:1055.8px;height:19px;line-height:19px;font-size:12px;color:#464c54;left:911.1px;width:1200px;text-align:center;">15:46</div>
<div class="t" style="top:1055.8px;height:19px;line-height:19px;font-size:12px;color:#464c54;left:988.4px;width:1200px;text-align:center;">15:48</div>
<div class="t" style="top:1055.8px;height:19px;line-height:19px;font-size:12px;color:#464c54;left:1065.6px;width:1200px;text-align:center;">15:50</div>
<div class="t" style="top:1055.8px;height:19px;line-height:19px;font-size:12px;color:#464c54;left:1142.9px;width:1200px;text-align:center;">15:52</div>
<div class="t" style="top:1055.8px;height:19px;line-height:19px;font-size:12px;color:#464c54;left:1220.2px;width:1200px;text-align:center;">15:54</div>
<div class="t" style="top:1055.8px;height:19px;line-height:19px;font-size:12px;color:#464c54;left:1297.5px;width:1200px;text-align:center;">15:56</div>
<div class="t" style="top:1055.8px;height:19px;line-height:19px;font-size:12px;color:#464c54;left:1374.8px;width:1200px;text-align:center;">15:58</div>
<div class="t" style="top:1055.8px;height:19px;line-height:19px;font-size:12px;color:#464c54;left:1452.1px;width:1200px;text-align:center;">16:00</div>
<div class="t" style="top:1055.8px;height:19px;line-height:19px;font-size:12px;color:#464c54;left:1529.4px;width:1200px;text-align:center;">16:02</div>
<div class="t" style="top:1055.8px;height:19px;line-height:19px;font-size:12px;color:#464c54;left:1606.6px;width:1200px;text-align:center;">16:04</div>
<div class="t" style="top:1055.8px;height:19px;line-height:19px;font-size:12px;color:#464c54;left:1683.9px;width:1200px;text-align:center;">16:06</div>
<div class="t" style="top:1055.8px;height:19px;line-height:19px;font-size:12px;color:#464c54;left:1761.2px;width:1200px;text-align:center;">16:08</div>
<div class="t" style="top:1055.8px;height:19px;line-height:19px;font-size:12px;color:#464c54;left:1838.5px;width:1200px;text-align:center;">16:10</div>
<div class="t" style="top:1078.8px;height:19px;line-height:19px;font-size:12px;color:#1f62e0;font-weight:700;right:199.0px;text-align:right;">min</div>
<div class="t" style="top:1078.8px;height:19px;line-height:19px;font-size:12px;color:#1f62e0;font-weight:700;right:143.0px;text-align:right;">max</div>
<div class="t" style="top:1078.8px;height:19px;line-height:19px;font-size:12px;color:#1f62e0;font-weight:700;right:86.0px;text-align:right;">avg</div>
<div class="t" style="top:1078.8px;height:19px;line-height:19px;font-size:12px;color:#1f62e0;font-weight:700;right:37.3px;text-align:right;">current</div>
<div class="t" style="top:1103.2px;height:19px;line-height:19px;font-size:12px;color:#33383d;right:191.0px;text-align:right;">0</div>
<div class="t" style="top:1103.2px;height:19px;line-height:19px;font-size:12px;color:#33383d;right:135.0px;text-align:right;">56.4 万</div>
<div class="t" style="top:1103.2px;height:19px;line-height:19px;font-size:12px;color:#33383d;right:79.0px;text-align:right;">20.5 万</div>
<div class="t" style="top:1103.2px;height:19px;line-height:19px;font-size:12px;color:#33383d;right:31.0px;text-align:right;">1</div>
<div style="position:absolute;left:1328px;top:1111px;width:14px;height:4px;background:#7eb26d;border-radius:1.5px;"></div>
<div class="t" style="top:1103.3px;height:19px;line-height:19px;font-size:12px;color:#33383d;letter-spacing:0.4px;left:1352.0px;">200</div>
<div style="position:absolute;left:76px;top:1142px;width:1228px;height:200px;background:#fff;border:1px solid #e1e2e4;border-radius:2px;box-sizing:border-box;"></div>
<div class="t" style="top:1145.8px;height:22px;line-height:22px;font-size:14px;color:#24292e;-webkit-text-stroke:0.3px #24292e;left:90.0px;width:1200px;text-align:center;">响应时间-分数位指标</div>
<svg style="left:0;top:0" width="2553" height="1274"><path d="M131.0 1192.5 H1279.0" stroke="rgba(0,0,0,0.09)" stroke-width="1"/><path d="M131.0 1234.5 H1279.0" stroke="rgba(0,0,0,0.09)" stroke-width="1"/><path d="M131.0 1277.5 H1279.0" stroke="rgba(0,0,0,0.09)" stroke-width="1"/><path d="M131.5 1192.3 V1400.0" stroke="rgba(0,0,0,0.09)" stroke-width="1"/><path d="M208.5 1192.3 V1400.0" stroke="rgba(0,0,0,0.09)" stroke-width="1"/><path d="M284.5 1192.3 V1400.0" stroke="rgba(0,0,0,0.09)" stroke-width="1"/><path d="M361.5 1192.3 V1400.0" stroke="rgba(0,0,0,0.09)" stroke-width="1"/><path d="M437.5 1192.3 V1400.0" stroke="rgba(0,0,0,0.09)" stroke-width="1"/><path d="M514.5 1192.3 V1400.0" stroke="rgba(0,0,0,0.09)" stroke-width="1"/><path d="M590.5 1192.3 V1400.0" stroke="rgba(0,0,0,0.09)" stroke-width="1"/><path d="M667.5 1192.3 V1400.0" stroke="rgba(0,0,0,0.09)" stroke-width="1"/><path d="M743.5 1192.3 V1400.0" stroke="rgba(0,0,0,0.09)" stroke-width="1"/><path d="M820.5 1192.3 V1400.0" stroke="rgba(0,0,0,0.09)" stroke-width="1"/><path d="M896.5 1192.3 V1400.0" stroke="rgba(0,0,0,0.09)" stroke-width="1"/><path d="M973.5 1192.3 V1400.0" stroke="rgba(0,0,0,0.09)" stroke-width="1"/><path d="M1049.5 1192.3 V1400.0" stroke="rgba(0,0,0,0.09)" stroke-width="1"/><path d="M1126.5 1192.3 V1400.0" stroke="rgba(0,0,0,0.09)" stroke-width="1"/><path d="M1202.5 1192.3 V1400.0" stroke="rgba(0,0,0,0.09)" stroke-width="1"/><path d="M973.0 1320.5 L1011.2 1235.6 H1164.2 V1320.5 Z" fill="#6ed0e0" fill-opacity="0.1"/><path d="M973.0 1320.5 L1011.2 1243.7 H1164.2 V1320.5 Z" fill="#eab839" fill-opacity="0.1"/><path d="M973.0 1320.5 L1011.2 1256.3 H1164.2 V1320.5 Z" fill="#7eb26d" fill-opacity="0.1"/><path d="M973.0 1320.5 L1011.2 1235.6 H1164.2" fill="none" stroke="#6ed0e0" stroke-opacity="0.75" stroke-width="1.6"/><path d="M973.0 1320.5 L1011.2 1243.7 H1164.2" fill="none" stroke="#eab839" stroke-opacity="0.75" stroke-width="1.6"/><path d="M973.0 1320.5 L1011.2 1256.3 H1164.2" fill="none" stroke="#7eb26d" stroke-opacity="0.75" stroke-width="1.6"/></svg>
<div class="t" style="top:1182.6px;height:19px;line-height:19px;font-size:12px;color:#464c54;right:2428.5px;text-align:right;">150 ms</div>
<div class="t" style="top:1224.6px;height:19px;line-height:19px;font-size:12px;color:#464c54;right:2428.5px;text-align:right;">100 ms</div>
<div class="t" style="top:1266.8px;height:19px;line-height:19px;font-size:12px;color:#464c54;right:2428.5px;text-align:right;">50 ms</div>
<div style="position:absolute;left:3px;top:1271px;width:182px;height:3px;background:#1b1b1b;border-top-right-radius:3px;"></div>
</body></html>
